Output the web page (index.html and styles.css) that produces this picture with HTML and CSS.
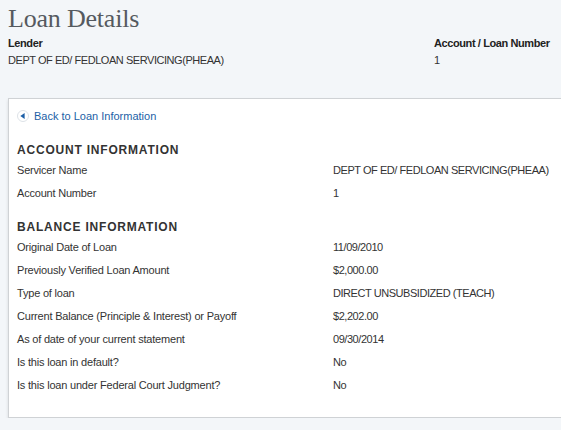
FILE: index.html
```html
<!DOCTYPE html>
<html>
<head>
<meta charset="utf-8">
<link rel="stylesheet" href="styles.css">
</head>
<body>
<div class="page">
  <h1 class="title">Loan Details</h1>
  <div class="summary">
    <div class="summary-col lender">
      <div class="summary-label">Lender</div>
      <div class="summary-value">DEPT OF ED/ FEDLOAN SERVICING(PHEAA)</div>
    </div>
    <div class="summary-col">
      <div class="summary-label">Account / Loan Number</div>
      <div class="summary-value">1</div>
    </div>
  </div>
  <div class="card">
    <a class="back" href="#">
      <svg class="back-icon" width="12" height="12" viewBox="0 0 12 12">
        <circle cx="6" cy="6" r="5.5" fill="#ffffff" stroke="#dde2e7" stroke-width="1"/>
        <path d="M3.3 6 L7.6 3 L7.6 9 Z" fill="#1d5fa6"/>
      </svg>
      <span>Back to Loan Information</span>
    </a>
    <h2 class="section-title">ACCOUNT INFORMATION</h2>
    <div class="row"><div class="label">Servicer Name</div><div class="value">DEPT OF ED/ FEDLOAN SERVICING(PHEAA)</div></div>
    <div class="row"><div class="label">Account Number</div><div class="value">1</div></div>
    <h2 class="section-title second">BALANCE INFORMATION</h2>
    <div class="row"><div class="label">Original Date of Loan</div><div class="value">11/09/2010</div></div>
    <div class="row"><div class="label">Previously Verified Loan Amount</div><div class="value">$2,000.00</div></div>
    <div class="row"><div class="label">Type of loan</div><div class="value">DIRECT UNSUBSIDIZED (TEACH)</div></div>
    <div class="row"><div class="label">Current Balance (Principle &amp; Interest) or Payoff</div><div class="value">$2,202.00</div></div>
    <div class="row"><div class="label">As of date of your current statement</div><div class="value">09/30/2014</div></div>
    <div class="row"><div class="label">Is this loan in default?</div><div class="value">No</div></div>
    <div class="row"><div class="label">Is this loan under Federal Court Judgment?</div><div class="value">No</div></div>
  </div>
</div>
</body>
</html>
```

FILE: styles.css
```css
html, body {
  margin: 0;
  padding: 0;
  background: #f3f6f9;
  overflow: hidden;
}
body {
  font-family: "Liberation Sans", Arial, sans-serif;
  font-size: 11px;
  color: #333333;
}
.page {
  padding-left: 8px;
}
.title {
  margin: 3px 0 0 0;
  font-family: "Liberation Serif", "Times New Roman", serif;
  font-weight: normal;
  font-size: 26px;
  line-height: 32px;
  letter-spacing: -0.2px;
  color: #555a60;
}
.summary {
  display: flex;
}
.summary-col.lender {
  width: 426px;
}
.summary-label {
  font-weight: bold;
  line-height: 16px;
  letter-spacing: -0.4px;
  color: #222222;
}
.summary-value {
  line-height: 16px;
  margin-top: 1px;
  letter-spacing: -0.45px;
}
.card {
  margin-top: 30px;
  background: #ffffff;
  border: 1px solid #cfd2d5;
  border-right: none;
  box-shadow: 0 2px 3px rgba(0, 0, 0, 0.12);
  padding: 9px 0 20px 8px;
}
.back {
  display: flex;
  align-items: center;
  gap: 5px;
  line-height: 16px;
  color: #1d5fa6;
  text-decoration: none;
}
.back-icon {
  display: block;
}
.section-title {
  margin: 17px 0 0 0;
  font-size: 12px;
  line-height: 18px;
  font-weight: bold;
  letter-spacing: 0.8px;
  color: #333333;
}
.section-title.second {
  margin-top: 13px;
}
.row {
  display: flex;
  line-height: 23px;
}
.label {
  width: 316px;
  letter-spacing: -0.2px;
}
.value {
  white-space: nowrap;
  letter-spacing: -0.45px;
}
```
